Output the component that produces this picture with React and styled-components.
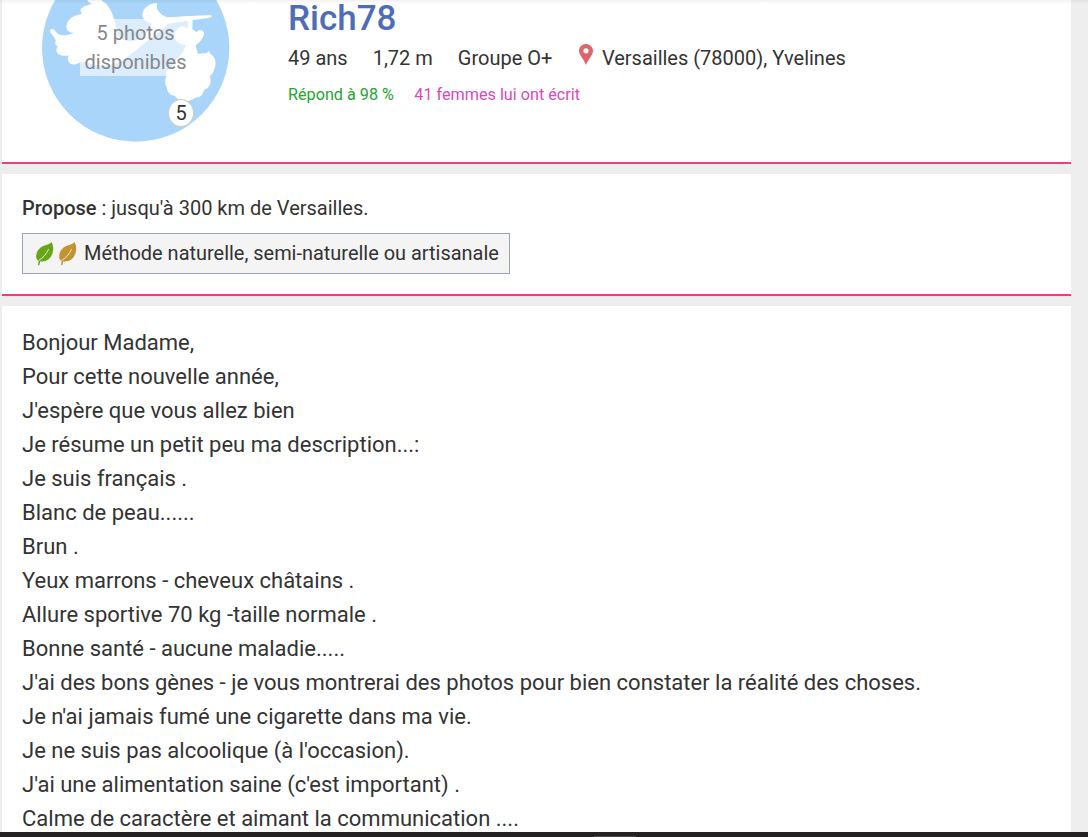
import React from 'react';
import styled, { createGlobalStyle } from 'styled-components';

const GlobalStyle = createGlobalStyle`
  * {
    box-sizing: border-box;
  }
  body {
    margin: 0;
    background-color: #eeeeee;
    color: #333333;
    font-family: Roboto, 'Liberation Sans', sans-serif;
  }
  p, h1 {
    margin: 0;
  }
`;

const Page = styled.div`
  display: flex;
  flex-direction: column;
  position: relative;
  height: 837px;
  overflow: hidden;
`;

const TopShadow = styled.div`
  position: absolute;
  top: 0;
  left: 0;
  right: 0;
  height: 4px;
  background: linear-gradient(rgba(0, 0, 0, 0.05), rgba(0, 0, 0, 0));
`;

const Content = styled.main`
  flex: 1;
  min-height: 0;
  overflow: hidden;
  display: flex;
  flex-direction: column;
  gap: 10px;
  padding: 0 17px 0 2px;
`;

const Card = styled.section`
  flex: none;
  height: ${props => props.$height};
  padding: ${props => props.$padding || '0 20px'};
  background-color: white;
  border-bottom: 2px solid #e74177;
`;

const Header = styled(Card)`
  display: flex;
  align-items: flex-start;
  gap: 58px;
`;

const Avatar = styled.div`
  position: relative;
  flex: none;
  width: 188px;
  height: 188px;
  margin-top: -46px;
  svg {
    display: block;
  }
`;

const PhotosLabel = styled.div`
  position: absolute;
  top: 65px;
  left: 38px;
  width: 111px;
  height: 57px;
  background-color: rgba(255, 255, 255, 0.6);
  color: #888888;
  font-size: 20px;
  line-height: 28.5px;
  text-align: center;
`;

const PhotosCount = styled.div`
  position: absolute;
  top: 145px;
  left: 126px;
  width: 26px;
  height: 28px;
  border: 1px solid #cccccc;
  border-radius: 50%;
  background-color: white;
  font-size: 20px;
  line-height: 26px;
  text-align: center;
`;

const Name = styled.h1`
  color: #4f6cb8;
  font-size: 35px;
  font-weight: 500;
  line-height: 38px;
`;

const Facts = styled.div`
  display: flex;
  gap: 25px;
  margin-top: 6px;
  font-size: 20px;
  line-height: 28px;
  white-space: nowrap;
`;

const Place = styled.span`
  display: flex;
  align-items: flex-start;
  gap: 8.5px;
  margin-left: 2px;
`;

const Activity = styled.div`
  display: flex;
  gap: 20.5px;
  margin-top: 13px;
  font-size: 16.2px;
  line-height: 20px;
`;

const Stat = styled.span`
  color: ${props => props.$color};
`;

const Offer = styled.p`
  font-size: 20px;
  line-height: 28px;
  b {
    font-weight: 500;
  }
`;

const Method = styled.div`
  display: inline-flex;
  align-items: center;
  height: 41px;
  margin-top: 11px;
  padding: 0 10px 0 13px;
  border: 1px solid #96a3b5;
  background-color: #f4f4f4;
  font-size: 19.95px;
  white-space: nowrap;
  svg {
    margin-right: 5px;
  }
  span {
    margin-left: 2px;
    padding-bottom: 2px;
  }
`;

const Description = styled.section`
  flex: none;
  padding: 20px 20px 0;
  background-color: white;
  font-size: 22px;
  line-height: 34px;
  white-space: nowrap;
`;

const BottomBar = styled.div`
  flex: none;
  display: flex;
  align-items: flex-end;
  height: 5px;
  padding-left: 594px;
  background-color: #232122;
  &::after {
    content: '';
    width: 42px;
    height: 1px;
    background-color: #4b4949;
  }
`;

const Stork = () => (
  <svg width="188" height="188" viewBox="36 -138 564 564">
    <circle cx="317" cy="144" r="281" fill="#a9d5fa" />
    <g fill="white">
      <path d="M60 94C60 86 68 85 74 91C80 102 92 106 101 106C114 106 124 102 132 98C118 99 109 91 109 80C111 62 124 47 152 43C157 41 157 38 152 35C149 24 162 18 184 13C186 11 183 9 178 8C164 -3 168 -30 190 -50L214 -30C209 -12 211 -3 218 4C234 13 245 32 251 54C257 72 260 90 263 105C276 122 299 127 322 120C338 114 350 100 359 83L365 71C348 67 336 57 337 43C340 23 357 11 379 9C385 10 379 20 381 26C390 40 399 49 413 52C455 50 504 46 543 46C549 49 543 52 534 54L413 71C402 84 382 101 361 115C331 142 305 160 282 178C251 200 206 202 170 187C158 183 150 187 138 193C122 196 112 187 114 173C116 168 117 166 112 167C94 169 80 164 79 151C79 144 83 142 84 139C77 137 74 132 77 125C79 119 71 108 64 101Z" />
      <path d="M475 60L488 59L487 88C492 90 496 97 500 96C504 88 516 87 522 97C524 107 512 126 498 135C496 143 503 151 503 161C507 163 516 159 526 160C532 160 535 156 537 151C537 158 540 161 545 164C557 172 560 194 553 207C552 216 545 224 539 229C543 239 544 253 535 262C531 267 526 269 522 269C520 282 513 291 502 292C494 292 489 301 475 303C457 303 441 299 434 287C421 286 411 276 411 264C404 254 405 236 409 229C406 217 413 207 424 205C425 193 436 180 447 171C457 161 464 148 467 135C449 135 432 122 433 106C436 91 446 79 459 79C466 79 468 84 472 86Z" />
    </g>
  </svg>
);

const Pin = () => (
  <svg width="14" height="21" viewBox="0 0 14 21">
    <path
      fill="#e06468"
      fillRule="evenodd"
      d="M7 0C3.1 0 0 3 0 6.8C0 11.5 5 15.5 7 21C9 15.5 14 11.5 14 6.8C14 3 10.9 0 7 0ZM7 4.2A2.6 2.6 0 1 1 7 9.4A2.6 2.6 0 1 1 7 4.2Z"
    />
  </svg>
);

const Leaf = ({ color }) => (
  <svg width="18" height="24" viewBox="0 0 18 24">
    <path
      fill={color}
      d="M15.6 0C17 3 17.6 6 17 9C16.4 14 13 18.4 8 19.3C6.6 19.5 5.5 19.4 4.3 19.2L3.4 23L1.9 23.2L2.7 18.8C1.3 18.3 .7 17.5 .3 16C-.4 10.8 2.3 6.3 7.2 4C10 2.6 13.5 2.6 15.6 0Z"
    />
    <path
      fill="none"
      stroke="#f4f4f4"
      strokeWidth="0.9"
      d="M2.7 18.4C7 16.2 10.3 12 12.6 7.2"
    />
  </svg>
);

const lines = [
  'Bonjour Madame,',
  'Pour cette nouvelle année,',
  "J'espère que vous allez bien",
  'Je résume un petit peu ma description...:',
  'Je suis français .',
  'Blanc de peau......',
  'Brun .',
  'Yeux marrons - cheveux châtains .',
  'Allure sportive 70 kg -taille normale .',
  'Bonne santé - aucune maladie.....',
  "J'ai des bons gènes - je vous montrerai des photos pour bien constater la réalité des choses.",
  "Je n'ai jamais fumé une cigarette dans ma vie.",
  "Je ne suis pas alcoolique (à l'occasion).",
  "J'ai une alimentation saine (c'est important) .",
  'Calme de caractère et aimant la communication ....',
];

const App = () => (
  <>
    <GlobalStyle />
    <Page>
      <Content>
        <Header $height="164px" $padding="0 20px 0 40px">
          <Avatar>
            <Stork />
            <PhotosLabel>
              5 photos
              <br />
              disponibles
            </PhotosLabel>
            <PhotosCount>5</PhotosCount>
          </Avatar>
          <div>
            <Name>Rich78</Name>
            <Facts>
              <span>49 ans</span>
              <span>1,72 m</span>
              <span>Groupe O+</span>
              <Place>
                <Pin />
                Versailles (78000), Yvelines
              </Place>
            </Facts>
            <Activity>
              <Stat $color="#21a62b">Répond à 98 %</Stat>
              <Stat $color="#d749bb">41 femmes lui ont écrit</Stat>
            </Activity>
          </div>
        </Header>
        <Card $height="122px" $padding="20px 20px 0">
          <Offer>
            <b>Propose</b> : jusqu'à 300 km de Versailles.
          </Offer>
          <Method>
            <Leaf color="#68a617" />
            <Leaf color="#c29431" />
            <span>Méthode naturelle, semi-naturelle ou artisanale</span>
          </Method>
        </Card>
        <Description>
          {lines.map(line => (
            <p key={line}>{line}</p>
          ))}
        </Description>
      </Content>
      <BottomBar />
      <TopShadow />
    </Page>
  </>
);

export default App;
